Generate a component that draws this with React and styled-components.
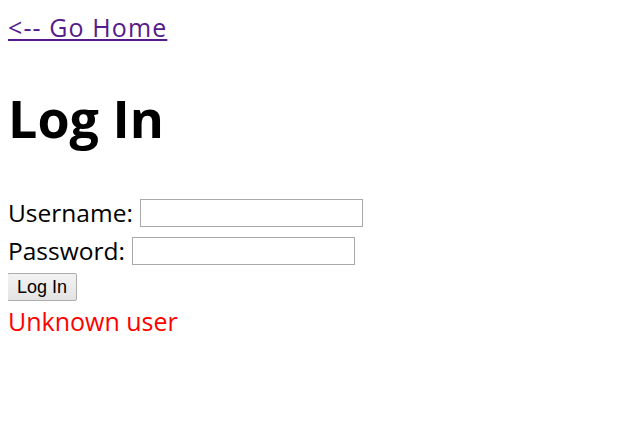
import styled, { createGlobalStyle } from "styled-components";

const GlobalStyle = createGlobalStyle`
  body {
    margin: 8px;
    font-family: "Open Sans", "Noto Sans", sans-serif;
    background: #ffffff;
    color: #000000;
  }
`;

const HomeLink = styled.a`
  display: block;
  font-size: 25px;
  letter-spacing: 1.1px;
  line-height: 30px;
  margin-top: 4px;
  color: #551a8b;
  text-decoration: underline;
`;

const Title = styled.h1`
  font-size: 52px;
  font-weight: 700;
  line-height: 60px;
  margin: 46px 0 46px;
`;

const Form = styled.form`
  display: flex;
  flex-direction: column;
  align-items: flex-start;
`;

const Row = styled.label`
  display: flex;
  align-items: center;
  gap: 7px;
  font-size: 24.5px;
  line-height: 38px;
  height: 38px;
`;

const TextInput = styled.input`
  box-sizing: border-box;
  width: 223px;
  height: 28px;
  border: 1px solid #a9a9a9;
  padding: 2px 4px;
  font-size: 16px;
`;

const SubmitButton = styled.button`
  box-sizing: border-box;
  margin-top: 3px;
  margin-left: -1px;
  height: 28px;
  padding: 0 9px;
  font-family: "Liberation Sans", Arial, sans-serif;
  font-size: 18px;
  color: #000;
  background: linear-gradient(#f3f3f3, #e3e3e3);
  border: 1px solid #adadad;
  border-radius: 2px;
`;

const ErrorText = styled.div`
  font-size: 25px;
  line-height: 40px;
  color: #ff0000;
`;

export default function App() {
  return (
    <>
      <GlobalStyle />
      <HomeLink href="#">&lt;-- Go Home</HomeLink>
      <Title>Log In</Title>
      <Form onSubmit={(e) => e.preventDefault()}>
        <Row>
          Username: <TextInput type="text" />
        </Row>
        <Row>
          Password: <TextInput type="password" />
        </Row>
        <SubmitButton type="submit">Log In</SubmitButton>
      </Form>
      <ErrorText>Unknown user</ErrorText>
    </>
  );
}
